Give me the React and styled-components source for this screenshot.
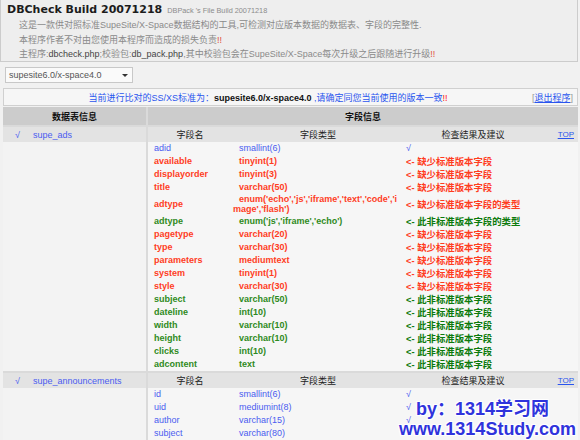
import React from "react"
import styled, { createGlobalStyle } from "styled-components"

const GlobalStyle = createGlobalStyle`
  html, body {
    margin: 0;
    padding: 0;
    background: #f1f1f1;
  }
  body {
    font-family: "Liberation Sans", "Noto Sans CJK SC", sans-serif;
    font-size: 9px;
    color: #333;
  }
`

const colors = {
  ok: "#4a5cf0",
  miss: "#ff3d1f",
  extra: "#2f8a22",
  extraMsg: "#0b7a0b",
  link: "#2a55ee",
}

const Page = styled.div`
  position: relative;
  width: 578px;
`

const Header = styled.div`
  height: 62px;
  box-sizing: border-box;
  border: 1px solid #cccccc;
  border-top: none;
  background: #eeeeee;
  padding: 2px 6px 0 6px;
`

const TitleRow = styled.div`
  display: flex;
  align-items: baseline;
  gap: 5px;
  line-height: 15px;
`

const Title = styled.span`
  font-family: "DejaVu Sans", sans-serif;
  font-weight: bold;
  font-size: 11px;
  color: #1c1c1c;
`

const SubTitle = styled.span`
  font-size: 7.3px;
  color: #8c8c8c;
`

const Desc = styled.div`
  padding-left: 12px;
  font-size: 9px;
  line-height: 14.5px;
  color: #8a8a8a;
  white-space: nowrap;
`

const Dark = styled.span`
  color: #444;
`

const Bang = styled.span`
  color: ${p => p.$color || "#e0503c"};
`

const SelectBox = styled.div`
  margin: 5px 0 0 5px;
  width: 128px;
  height: 16px;
  box-sizing: border-box;
  border: 1px solid #c8c8c8;
  background: #fafafa;
  display: flex;
  align-items: center;
  justify-content: space-between;
  padding: 0 4px 0 3px;
  color: #555;
  font-size: 9px;
`

const Arrow = styled.span`
  width: 0;
  height: 0;
  border-left: 3px solid transparent;
  border-right: 3px solid transparent;
  border-top: 3px solid #333;
`

const InfoBar = styled.div`
  margin: 5px 0 0 3px;
  height: 18px;
  box-sizing: border-box;
  border: 1px solid #d0d0d0;
  background: #f6f6f6;
  display: flex;
  align-items: center;
  font-size: 9px;
`

const InfoText = styled.div`
  flex: 1;
  text-align: center;
  color: ${colors.link};
  white-space: nowrap;

  b {
    color: #111;
    font-weight: bold;
  }
`

const Quit = styled.div`
  padding-right: 4px;
  color: #999;
  white-space: nowrap;

  a {
    color: ${colors.link};
    text-decoration: underline;
  }
`

const MainTable = styled.div`
  margin: 1px 0 0 3px;
  display: grid;
  grid-template-columns: 143px 1fr;
  gap: 2px;
  background: #dadada;
`

const HeadCell = styled.div`
  height: 18px;
  background: #cccccc;
  display: flex;
  align-items: center;
  justify-content: center;
  font-weight: bold;
  font-size: 9px;
  color: #111;
`

const LeftCell = styled.div`
  background: #f3f3f3;
`

const RightCell = styled.div`
  background: #f6f6f6;
`

const Band = styled.div`
  height: 15px;
  background: #e3e3e3;
  display: flex;
  align-items: center;
`

const TableName = styled(Band)`
  padding-left: 12px;
  color: ${colors.ok};
  font-size: 9px;
`

const Check = styled.span`
  color: ${colors.ok};
  margin-right: ${p => p.$gap || 0}px;
`

const cols = "84px 172px 138px 1fr"

const InnerHead = styled(Band)`
  display: grid;
  grid-template-columns: ${cols};
  font-size: 9px;
  color: #222;

  & > span {
    text-align: center;
  }
`

const TopLink = styled.a`
  text-align: right !important;
  padding-right: 4px;
  color: ${colors.link};
  text-decoration: underline;
  font-size: 8px;
`

const Row = styled.div`
  display: grid;
  grid-template-columns: ${cols};
  align-items: center;
  line-height: 11px;
  padding: 1px 0;
  color: ${p => colors[p.$tone]};
  font-weight: ${p => (p.$tone === "ok" ? "normal" : "bold")};
  font-size: 9px;
`

const NameCell = styled.div`
  padding-left: 6px;
  white-space: nowrap;
`

const TypeCell = styled.div`
  padding-left: 1px;
  text-indent: 6px;
  word-break: break-all;
  line-height: ${p => (p.$wrap ? "9.5px" : "11px")};
`

const ResultCell = styled.div`
  padding-left: 2px;
  white-space: nowrap;
  color: ${p => (p.$tone === "extra" ? colors.extraMsg : colors[p.$tone])};
  font-size: ${p => (p.$tone === "ok" ? "9px" : "9.4px")};
`

const Watermark = styled.div`
  position: absolute;
  left: 399px;
  top: 399px;
  font-family: "Liberation Sans", "Noto Sans CJK SC", sans-serif;
  font-weight: bold;
  font-size: 18px;
  line-height: 20px;
  color: #2f33dc;
  white-space: nowrap;
  text-shadow: 1px 1px 1px #fff, -1px -1px 1px #fff, 1px -1px 1px #fff, -1px 1px 1px #fff;
`

const WmLine = styled.div`
  padding-left: ${p => p.$indent || 0}px;
`

const messages = {
  miss: "缺少标准版本字段",
  extra: "此非标准版本字段",
}

const tables = [
  {
    name: "supe_ads",
    fields: [
      { name: "adid", type: "smallint(6)", tone: "ok" },
      { name: "available", type: "tinyint(1)", tone: "miss" },
      { name: "displayorder", type: "tinyint(3)", tone: "miss" },
      { name: "title", type: "varchar(50)", tone: "miss" },
      {
        name: "adtype",
        type: "enum('echo','js','iframe','text','code','image','flash')",
        tone: "miss",
        msg: "缺少标准版本字段的类型",
        wrap: true,
      },
      { name: "adtype", type: "enum('js','iframe','echo')", tone: "extra", msg: "此非标准版本字段的类型" },
      { name: "pagetype", type: "varchar(20)", tone: "miss" },
      { name: "type", type: "varchar(30)", tone: "miss" },
      { name: "parameters", type: "mediumtext", tone: "miss" },
      { name: "system", type: "tinyint(1)", tone: "miss" },
      { name: "style", type: "varchar(30)", tone: "miss" },
      { name: "subject", type: "varchar(50)", tone: "extra" },
      { name: "dateline", type: "int(10)", tone: "extra" },
      { name: "width", type: "varchar(10)", tone: "extra" },
      { name: "height", type: "varchar(10)", tone: "extra" },
      { name: "clicks", type: "int(10)", tone: "extra" },
      { name: "adcontent", type: "text", tone: "extra" },
    ],
  },
  {
    name: "supe_announcements",
    fields: [
      { name: "id", type: "smallint(6)", tone: "ok" },
      { name: "uid", type: "mediumint(8)", tone: "ok" },
      { name: "author", type: "varchar(15)", tone: "ok" },
      { name: "subject", type: "varchar(80)", tone: "ok" },
      { name: "message", type: "text", tone: "ok" },
      { name: "starttime", type: "int(10)", tone: "ok" },
    ],
  },
]

const FieldRow = ({ field }) => (
  <Row $tone={field.tone}>
    <NameCell>{field.name}</NameCell>
    <TypeCell $wrap={field.wrap}>{field.type}</TypeCell>
    <ResultCell $tone={field.tone}>
      {field.tone === "ok" ? "√" : `<- ${field.msg || messages[field.tone]}`}
    </ResultCell>
    <span />
  </Row>
)

const TableBlock = ({ table }) => (
  <>
    <LeftCell>
      <TableName>
        <Check $gap={13}>√</Check>
        {table.name}
      </TableName>
    </LeftCell>
    <RightCell>
      <InnerHead>
        <span>字段名</span>
        <span>字段类型</span>
        <span>检查结果及建议</span>
        <TopLink href="#top">TOP</TopLink>
      </InnerHead>
      {table.fields.map((f, i) => (
        <FieldRow key={i} field={f} />
      ))}
    </RightCell>
  </>
)

export default function App() {
  return (
    <Page>
      <GlobalStyle />
      <Header>
        <TitleRow>
          <Title>DBCheck Build 20071218</Title>
          <SubTitle>DBPack 's File Build 20071218</SubTitle>
        </TitleRow>
        <Desc>
          <div>这是一款供对照标准SupeSite/X-Space数据结构的工具,可检测对应版本数据的数据表、字段的完整性.</div>
          <div>
            本程序作者不对由您使用本程序而造成的损失负责<Bang>!!</Bang>
          </div>
          <div>
            主程序:<Dark>dbcheck.php</Dark>;校验包:<Dark>db_pack.php</Dark>,其中校验包会在SupeSite/X-Space每次升级之后跟随进行升级
            <Bang>!!</Bang>
          </div>
        </Desc>
      </Header>

      <SelectBox>
        <span>supesite6.0/x-space4.0</span>
        <Arrow />
      </SelectBox>

      <InfoBar>
        <InfoText>
          当前进行比对的SS/XS标准为：<b>supesite6.0/x-space4.0</b> ,请确定同您当前使用的版本一致
          <Bang $color="#ff2020">!!</Bang>
        </InfoText>
        <Quit>
          [<a href="#quit">退出程序</a>]
        </Quit>
      </InfoBar>

      <MainTable>
        <HeadCell>数据表信息</HeadCell>
        <HeadCell>字段信息</HeadCell>
        {tables.map(t => (
          <TableBlock key={t.name} table={t} />
        ))}
      </MainTable>

      <Watermark>
        <WmLine $indent={17}>by：1314学习网</WmLine>
        <WmLine>www.1314Study.com</WmLine>
      </Watermark>
    </Page>
  )
}
